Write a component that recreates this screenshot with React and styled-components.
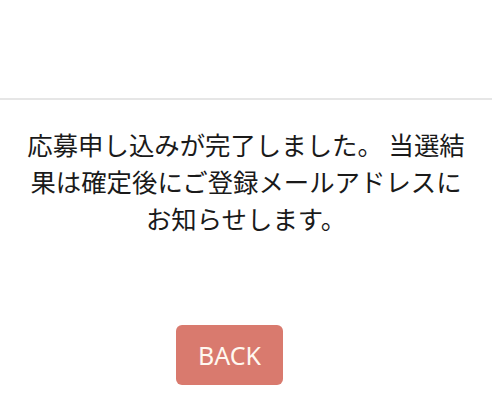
import styled, { createGlobalStyle } from 'styled-components';

const GlobalStyle = createGlobalStyle`
    html, body {
        margin: 0;
        padding: 0;
        background: #ffffff;
    }
    body {
        font-family: "Noto Sans CJK JP", "Noto Sans", sans-serif;
    }
`;

export default function App () {
    return (
        <Page>
            <GlobalStyle />
            <Header />
            <Message>
                応募申し込みが完了しました。 当選結果は確定後にご登録メールアドレスにお知らせします。
            </Message>
            <Actions>
                <BackButton type="button">BACK</BackButton>
            </Actions>
        </Page>
    );
}

const Page = styled.div`
    width: 100%;
    min-height: 406px;
    display: flex;
    flex-direction: column;
    background-color: #ffffff;
`;

const Header = styled.div`
    height: 98px;
    border-bottom: 2px solid #e6e6e6;
`;

const Message = styled.p`
    margin: 26px 0 0;
    padding: 0 20px;
    text-align: center;
    font-family: "Noto Sans CJK JP", sans-serif;
    font-size: 25.4px;
    line-height: 37px;
    color: #1a1a1a;
`;

const Actions = styled.div`
    display: flex;
    justify-content: center;
    margin-top: 88px;
`;

const BackButton = styled.button`
    width: 107px;
    height: 60px;
    margin-right: 33px;
    border: none;
    border-radius: 6px;
    background-color: #d97a6e;
    color: #fff8f0;
    font-family: "Noto Sans", sans-serif;
    font-size: 25px;
    cursor: pointer;
`;
